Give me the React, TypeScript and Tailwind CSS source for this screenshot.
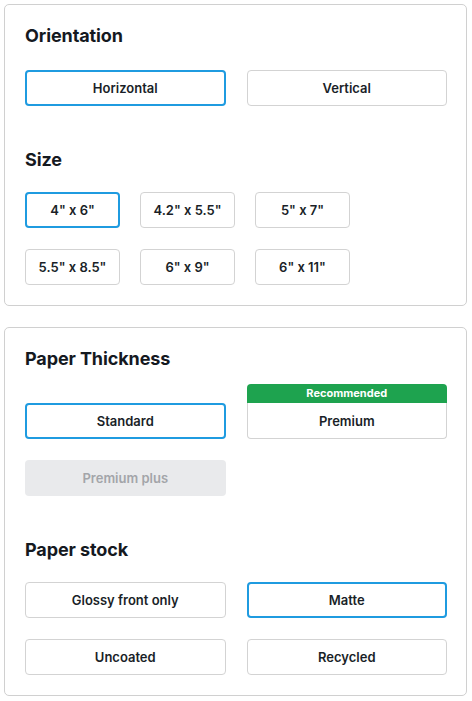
import React, { useState } from "react";

const font = { fontFamily: "Inter, 'Noto Sans', sans-serif" };

function Option({
  label,
  selected,
  disabled,
  onClick,
}: {
  label: string;
  selected?: boolean;
  disabled?: boolean;
  onClick?: () => void;
}) {
  if (disabled) {
    return (
      <div className="flex h-9 items-center justify-center rounded-[4px] bg-[#e9eaec] pt-px text-[13px] font-semibold text-[#a3a5a9]">
        {label}
      </div>
    );
  }
  return (
    <button
      onClick={onClick}
      className={`flex h-9 items-center justify-center rounded-[4px] bg-white pt-px text-[13px] font-semibold text-[#1a1f28] ${
        selected ? "border-2 border-[#1f9be0]" : "border border-[#d3d3d3]"
      }`}
    >
      {label}
    </button>
  );
}

function Title({ children, className }: { children: React.ReactNode; className?: string }) {
  return (
    <h2 className={`text-[18px] leading-6 font-bold tracking-[-0.1px] text-[#15191f] ${className ?? ""}`}>
      {children}
    </h2>
  );
}

export default function App() {
  const [orientation, setOrientation] = useState("Horizontal");
  const [size, setSize] = useState('4" x 6"');
  const [thickness, setThickness] = useState("Standard");
  const [stock, setStock] = useState("Matte");

  const sizes = ['4" x 6"', '4.2" x 5.5"', '5" x 7"', '5.5" x 8.5"', '6" x 9"', '6" x 11"'];
  const stocks = ["Glossy front only", "Matte", "Uncoated", "Recycled"];

  return (
    <div className="min-h-screen bg-white pt-1 pl-1" style={font}>
      {/* Формат */}
      <div className="w-[463px] rounded-[5px] border border-[#d0d0d0] pt-[19px] pb-5 pl-5 pr-[19px]">
        <Title>Orientation</Title>
        <div className="mt-[22px] grid grid-cols-2 gap-x-[21px]">
          {["Horizontal", "Vertical"].map((o) => (
            <Option key={o} label={o} selected={orientation === o} onClick={() => setOrientation(o)} />
          ))}
        </div>

        <Title className="mt-[42px]">Size</Title>
        <div className="mt-[20px] grid grid-cols-[95px_95px_95px] gap-x-[20px] gap-y-[21px]">
          {sizes.map((s) => (
            <Option key={s} label={s} selected={size === s} onClick={() => setSize(s)} />
          ))}
        </div>
      </div>

      {/* Бумага */}
      <div className="mt-[21px] w-[463px] rounded-[5px] border border-[#d0d0d0] pt-[19px] pb-5 pl-5 pr-[19px]">
        <Title>Paper Thickness</Title>
        <div className="mt-[13px] grid grid-cols-2 items-end gap-x-[21px]">
          <Option label="Standard" selected={thickness === "Standard"} onClick={() => setThickness("Standard")} />
          <div className="flex flex-col">
            <div className="flex h-[19px] items-center justify-center rounded-t-[4px] bg-[#1ea34f] text-[11px] font-bold text-white">
              Recommended
            </div>
            <button
              onClick={() => setThickness("Premium")}
              className={`flex h-9 items-center justify-center rounded-b-[4px] bg-white pt-[2px] text-[13px] font-semibold text-[#1a1f28] ${
                thickness === "Premium" ? "border-2 border-t-0 border-[#1f9be0]" : "border border-t-0 border-[#d3d3d3]"
              }`}
            >
              Premium
            </button>
          </div>
        </div>
        <div className="mt-[21px] grid grid-cols-2 gap-x-[21px]">
          <Option label="Premium plus" disabled />
        </div>

        <Title className="mt-[42px]">Paper stock</Title>
        <div className="mt-[20px] grid grid-cols-2 gap-x-[21px] gap-y-[21px]">
          {stocks.map((s) => (
            <Option key={s} label={s} selected={stock === s} onClick={() => setStock(s)} />
          ))}
        </div>
      </div>
    </div>
  );
}
